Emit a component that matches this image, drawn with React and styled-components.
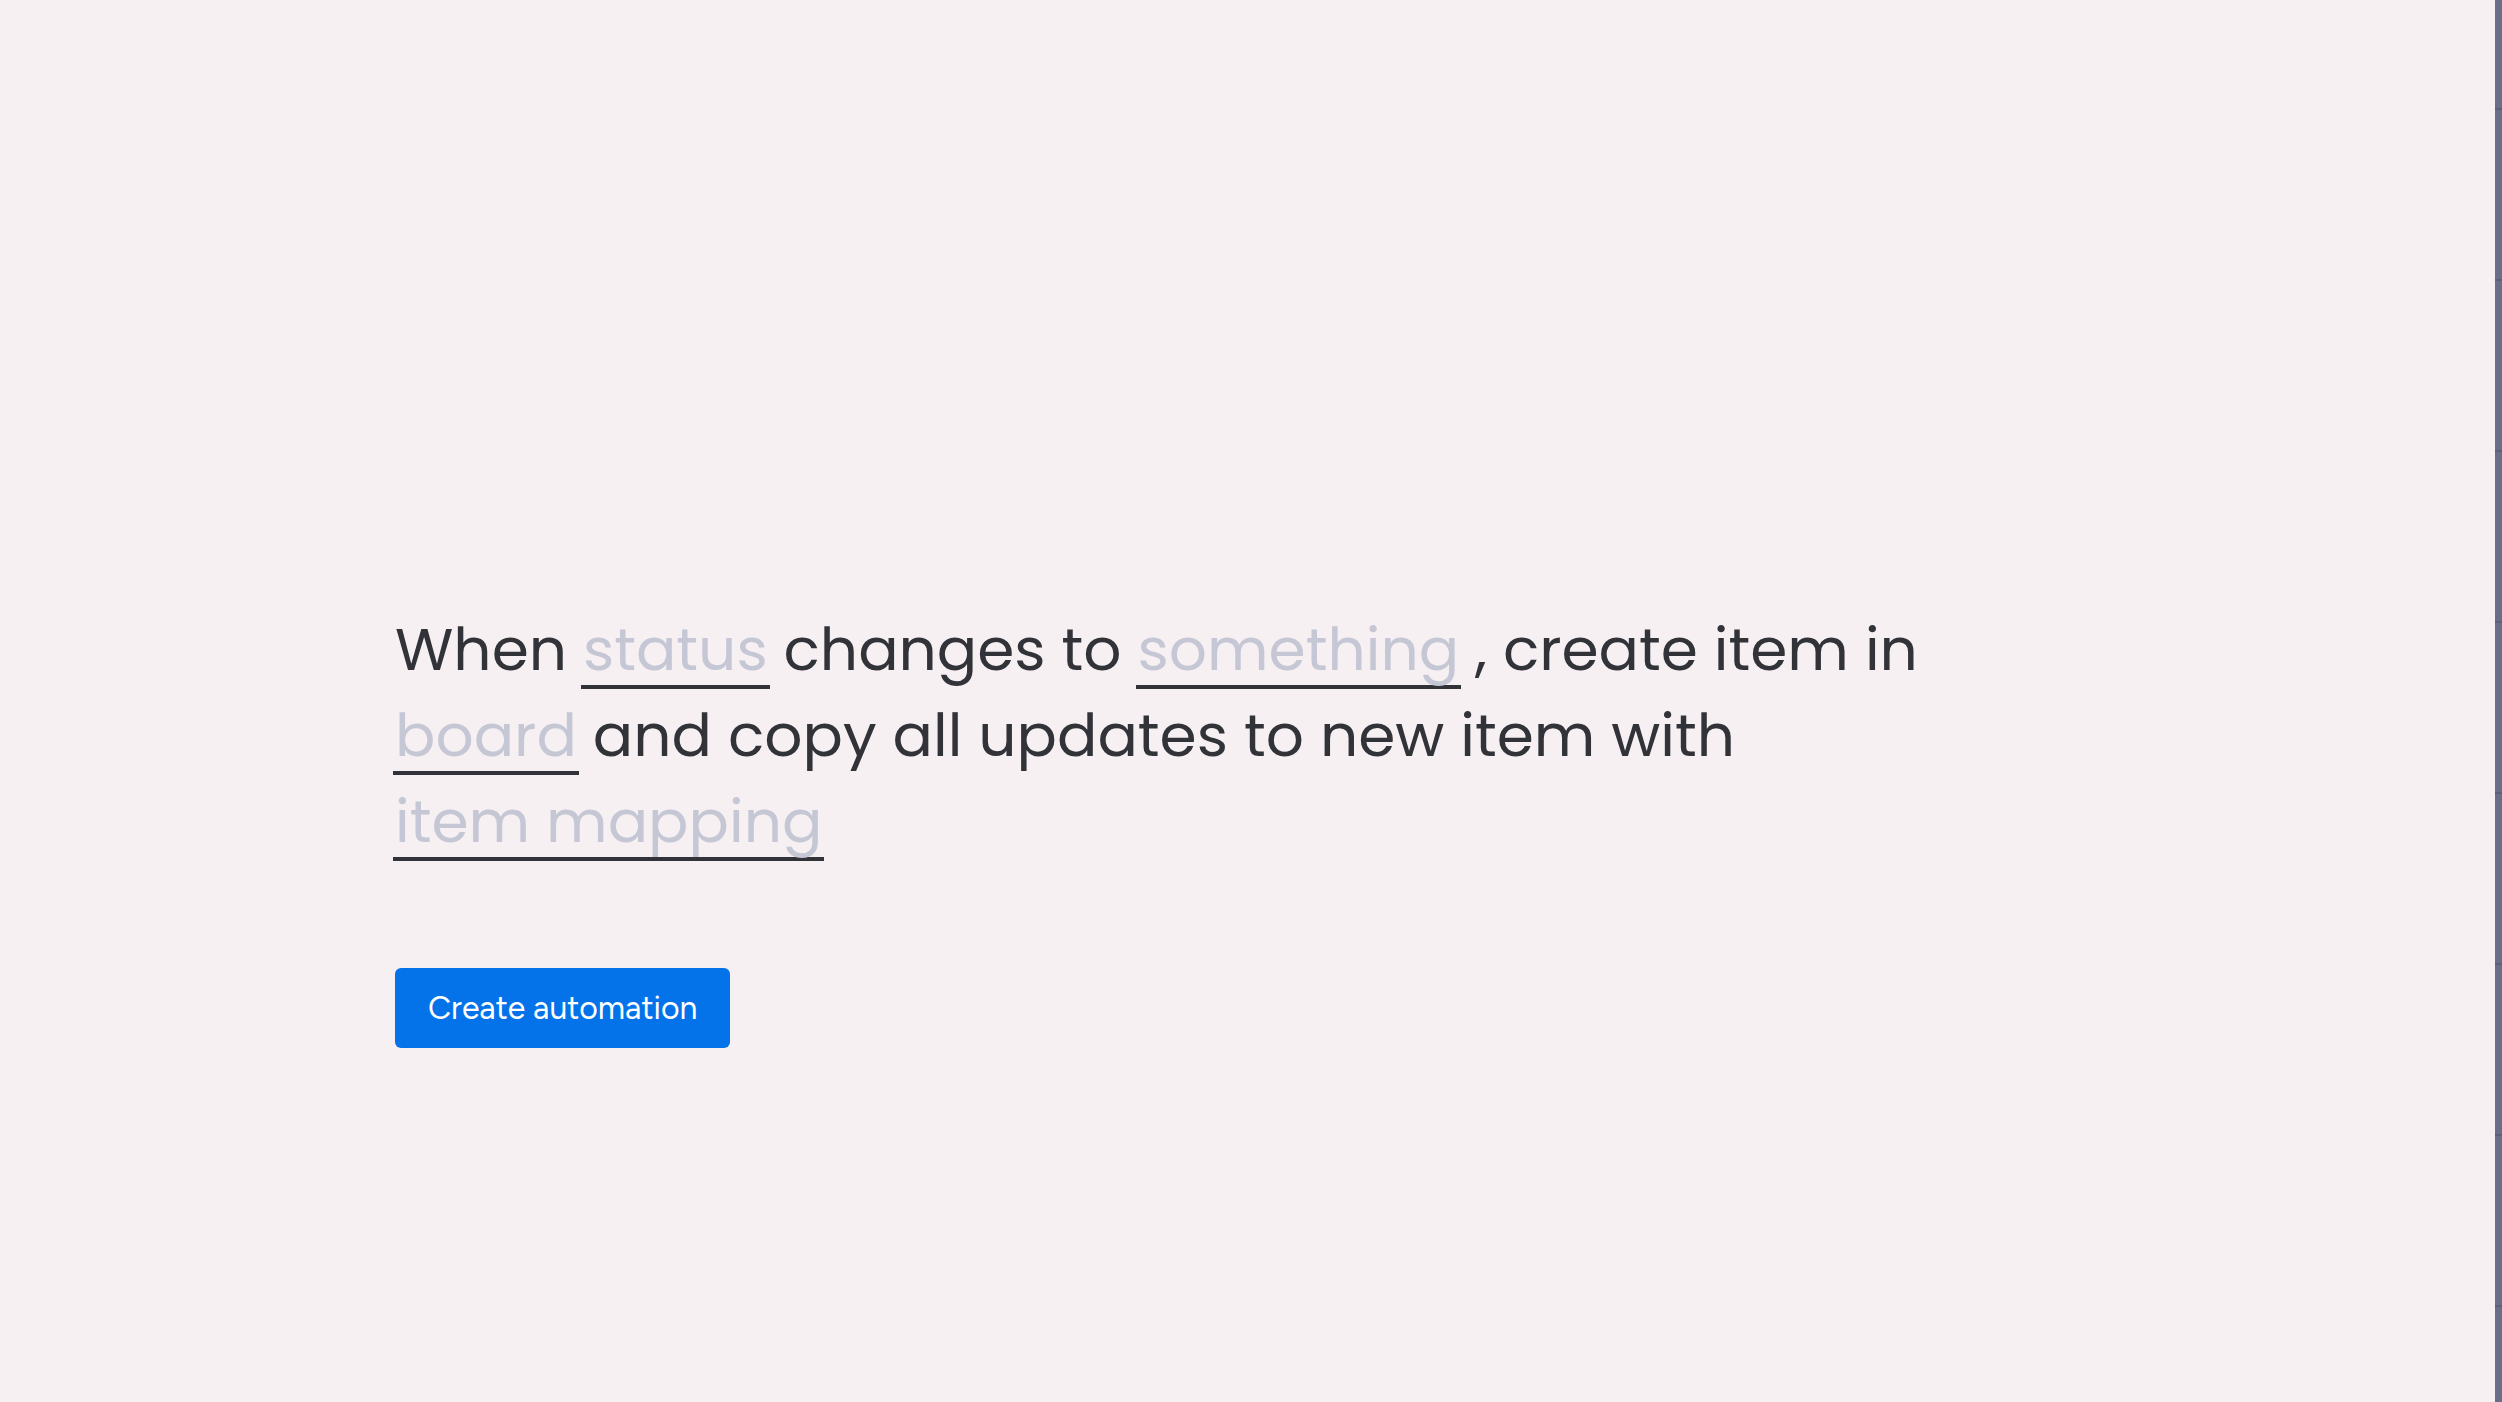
import React from 'react';
import styled, { createGlobalStyle } from 'styled-components';

const GlobalStyle = createGlobalStyle`
  html, body {
    margin: 0;
    padding: 0;
    background: #f6f0f3;
  }
  body {
    font-family: Poppins, Inter, sans-serif;
    color: #323338;
  }
`;

const Page = styled.div`
  display: flex;
  height: 1402px;
`;

const Main = styled.main`
  flex: 1;
  padding: 606px 0 0 395px;
  box-sizing: border-box;
`;

/* thin rail on the right edge */
const Rail = styled.div`
  width: 7px;
  flex-shrink: 0;
  background: repeating-linear-gradient(
    to bottom,
    #6c6d87 0px,
    #6c6d87 108px,
    #5f6075 108px,
    #5f6075 110px,
    #6c6d87 110px,
    #6c6d87 171px
  );
`;

const Sentence = styled.p`
  margin: 0;
  width: 1640px;
  font-family: Poppins, Inter, sans-serif;
  font-size: 59.8px;
  line-height: 86px;
  font-weight: 400;
  color: #323338;
`;

const Slot = styled.span`
  display: inline-block;
  line-height: 72px;
  padding: 0 2px;
  margin: 0 -2px;
  color: #c5c7d4;
  border-bottom: 4px solid #323338;
`;

const Button = styled.button`
  margin-top: 104px;
  height: 80px;
  padding: 0 33px;
  border: none;
  border-radius: 6px;
  background: #0473ea;
  color: #fff;
  font-family: Figtree, Inter, sans-serif;
  font-size: 32px;
  cursor: pointer;
`;

const App = () => {
  return (
    <>
      <GlobalStyle />
      <Page>
        <Main>
          <Sentence>
            When <Slot>status</Slot> changes to <Slot>something</Slot> , create item in{' '}
            <Slot>board</Slot> and copy all updates to new item with{' '}
            <Slot>item mapping</Slot>
          </Sentence>
          <Button>Create automation</Button>
        </Main>
        <Rail />
      </Page>
    </>
  );
};

export default App;
